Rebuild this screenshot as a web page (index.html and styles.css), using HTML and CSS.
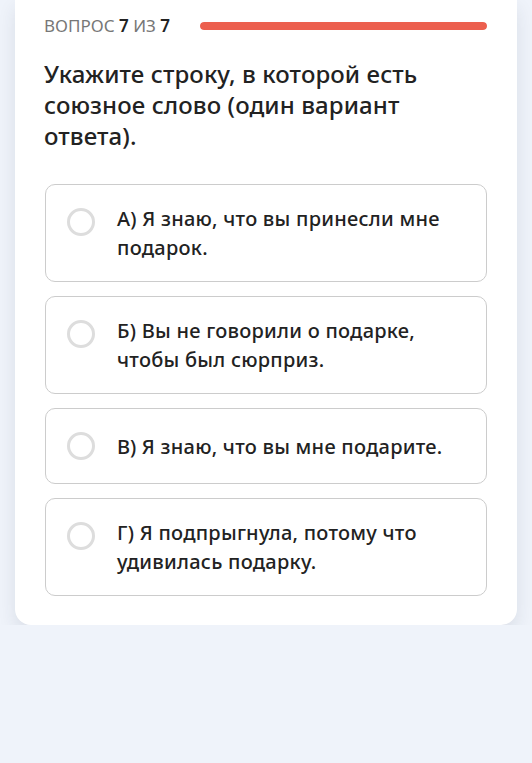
FILE: index.html
```html
<!DOCTYPE html>
<html lang="ru">
<head>
  <meta charset="UTF-8" />
  <meta name="viewport" content="width=device-width, initial-scale=1.0"/>
  <title>Тест</title>
  <link rel="stylesheet" href="styles.css">
</head>
<body>

<div class="card">
  <div class="progress-row">
    <span class="progress-label">ВОПРОС <b>7</b> ИЗ <b>7</b></span>
    <div class="progress-track"><div class="progress-fill" style="width: 100%"></div></div>
  </div>

  <h2 class="question">Укажите строку, в которой есть союзное слово (один вариант ответа).</h2>

  <div class="options">
    <label class="option">
      <span class="radio"></span>
      <span class="option-text">А) Я знаю, что вы принесли мне подарок.</span>
    </label>
    <label class="option">
      <span class="radio"></span>
      <span class="option-text">Б) Вы не говорили о подарке, чтобы был сюрприз.</span>
    </label>
    <label class="option">
      <span class="radio"></span>
      <span class="option-text">В) Я знаю, что вы мне подарите.</span>
    </label>
    <label class="option">
      <span class="radio"></span>
      <span class="option-text">Г) Я подпрыгнула, потому что удивилась подарку.</span>
    </label>
  </div>
</div>

</body>
</html>
```

FILE: styles.css
```css
html, body {
  margin: 0;
  padding: 0;
  background: #eff3fa;
  font-family: "Noto Sans", sans-serif;
  color: #222;
}

.card {
  margin: 0 15px;
  background: #fff;
  border-radius: 0 0 16px 16px;
  padding: 12px 30px 29px 30px;
  box-shadow: 0 8px 18px rgba(40, 50, 70, 0.10);
}

.progress-row {
  display: flex;
  align-items: center;
  gap: 30px;
}

.progress-label {
  font-size: 17px;
  color: #777;
  line-height: 28px;
  margin-left: -1px;
}

.progress-label b {
  color: #222;
  font-weight: 600;
}

.progress-track {
  flex: 1;
  height: 8px;
  border-radius: 4px;
  background: #f3d3cf;
  overflow: hidden;
}

.progress-fill {
  height: 100%;
  background: #ec5f4e;
  border-radius: 4px;
}

.question {
  margin: 18px 0 33px -1px;
  font-size: 24px;
  line-height: 31px;
  font-weight: 500;
  letter-spacing: 0.1px;
}

.options {
  display: flex;
  flex-direction: column;
  gap: 14px;
}

.option {
  display: flex;
  align-items: flex-start;
  gap: 22px;
  border: 1px solid #ccc;
  border-radius: 10px;
  padding: 19px 20px 19px 21px;
  cursor: pointer;
}

.radio {
  flex: none;
  width: 22px;
  height: 22px;
  border: 3px solid #ddd;
  border-radius: 50%;
  margin-top: 4px;
}

.option-text {
  font-size: 20px;
  line-height: 29px;
  font-weight: 500;
  letter-spacing: 0.25px;
  min-height: 36px;
  display: flex;
  align-items: center;
}
```
